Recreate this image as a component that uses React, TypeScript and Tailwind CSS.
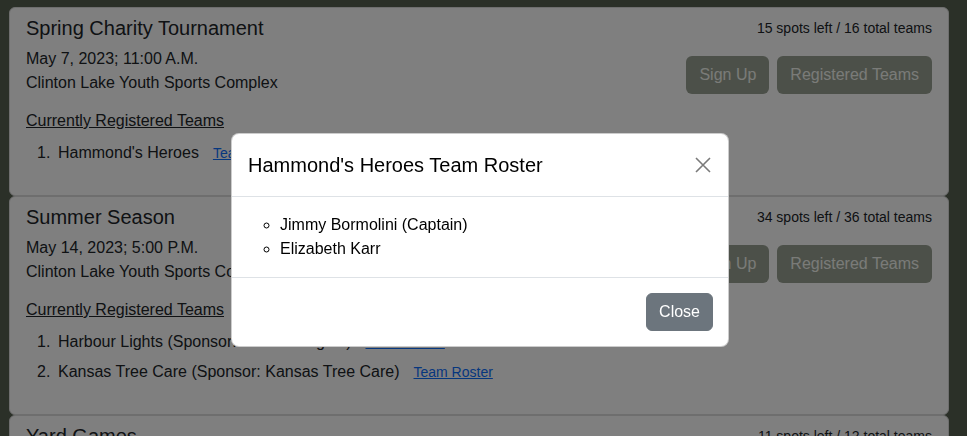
import React from 'react';

type Team = { name: string };

type Event = {
  title: string;
  when: string;
  where: string;
  spots: string;
  teams: Team[];
};

const EVENTS: Event[] = [
  {
    title: 'Spring Charity Tournament',
    when: 'May 7, 2023; 11:00 A.M.',
    where: 'Clinton Lake Youth Sports Complex',
    spots: '15 spots left / 16 total teams',
    teams: [{ name: "Hammond's Heroes" }],
  },
  {
    title: 'Summer Season',
    when: 'May 14, 2023; 5:00 P.M.',
    where: 'Clinton Lake Youth Sports Complex',
    spots: '34 spots left / 36 total teams',
    teams: [
      { name: 'Harbour Lights (Sponsor: Harbour Lights)' },
      { name: 'Kansas Tree Care (Sponsor: Kansas Tree Care)' },
    ],
  },
  {
    title: 'Yard Games',
    when: 'June 3, 2023; 10:00 A.M.',
    where: 'Clinton Lake Youth Sports Complex',
    spots: '11 spots left / 12 total teams',
    teams: [{ name: 'Backyard Legends' }],
  },
];

const EventCard: React.FC<{ event: Event }> = ({ event }) => (
  <div className="flex justify-between rounded-md border border-[#dcdcdc] bg-white px-4 pt-2 pb-[14px]">
    <div>
      <h5 className="mb-[7px] text-[20px] leading-[24px]">{event.title}</h5>
      <p className="text-base leading-6">{event.when}</p>
      <p className="text-base leading-6">{event.where}</p>
      <p className="mt-[14px] text-base leading-6 underline">Currently Registered Teams</p>
      <ol className="mt-[8px] mb-4 pl-[11px]">
        {event.teams.map((t, i) => (
          <li key={t.name} className="mb-[6px] flex text-base leading-6">
            <span className="w-[21px]">{i + 1}.</span>
            <span>{t.name}</span>
            <a href="#" className="ml-[14px] text-[14px] text-[#0d6efd] underline">Team Roster</a>
          </li>
        ))}
      </ol>
    </div>
    <div className="flex flex-col items-end">
      <small className="mt-[2px] text-[14px] leading-[21px]">{event.spots}</small>
      <div className="mt-[17px] flex gap-2">
        <button className="rounded-md border border-transparent bg-[#98a092] px-3 py-1.5 text-base leading-6 text-[#f4f7f1]">
          Sign Up
        </button>
        <button className="rounded-md border border-transparent bg-[#98a092] px-3 py-1.5 text-base leading-6 text-[#f4f7f1]">
          Registered Teams
        </button>
      </div>
    </div>
  </div>
);

const App: React.FC = () => {
  return (
    <div className="relative h-screen overflow-hidden bg-[#566150] pt-[7px] pr-[18px] pl-[9px] font-['Liberation_Sans',Arial,sans-serif] text-[#212529]">
      {EVENTS.map(e => (
        <EventCard key={e.title} event={e} />
      ))}

      {/* Backdrop */}
      <div className="fixed inset-0 bg-black/50" />

      {/* Modal */}
      <div className="fixed top-[133px] left-[231px] w-[498px] rounded-lg border border-black/20 bg-white">
        <div className="flex items-center justify-between border-b border-[#dee2e6] p-4">
          <h5 className="text-[20px] leading-[30px] text-black">Hammond's Heroes Team Roster</h5>
          <button className="mr-[1px] flex h-4 w-4 items-center justify-center">
            <svg width="16" height="16" viewBox="0 0 16 16" fill="none" stroke="#7a7a7a" strokeWidth="1.6">
              <path d="M1 1 L15 15 M15 1 L1 15" />
            </svg>
          </button>
        </div>
        <div className="border-b border-[#dee2e6] p-4">
          <ul className="list-[circle] pl-8 text-base leading-6 text-black">
            <li>Jimmy Bormolini (Captain)</li>
            <li>Elizabeth Karr</li>
          </ul>
        </div>
        <div className="flex justify-end py-[15px] pr-[15px]">
          <button className="rounded-md border border-[#6c757d] bg-[#6c757d] px-3 py-1.5 text-base leading-6 text-white">
            Close
          </button>
        </div>
      </div>
    </div>
  );
};

export default App;
